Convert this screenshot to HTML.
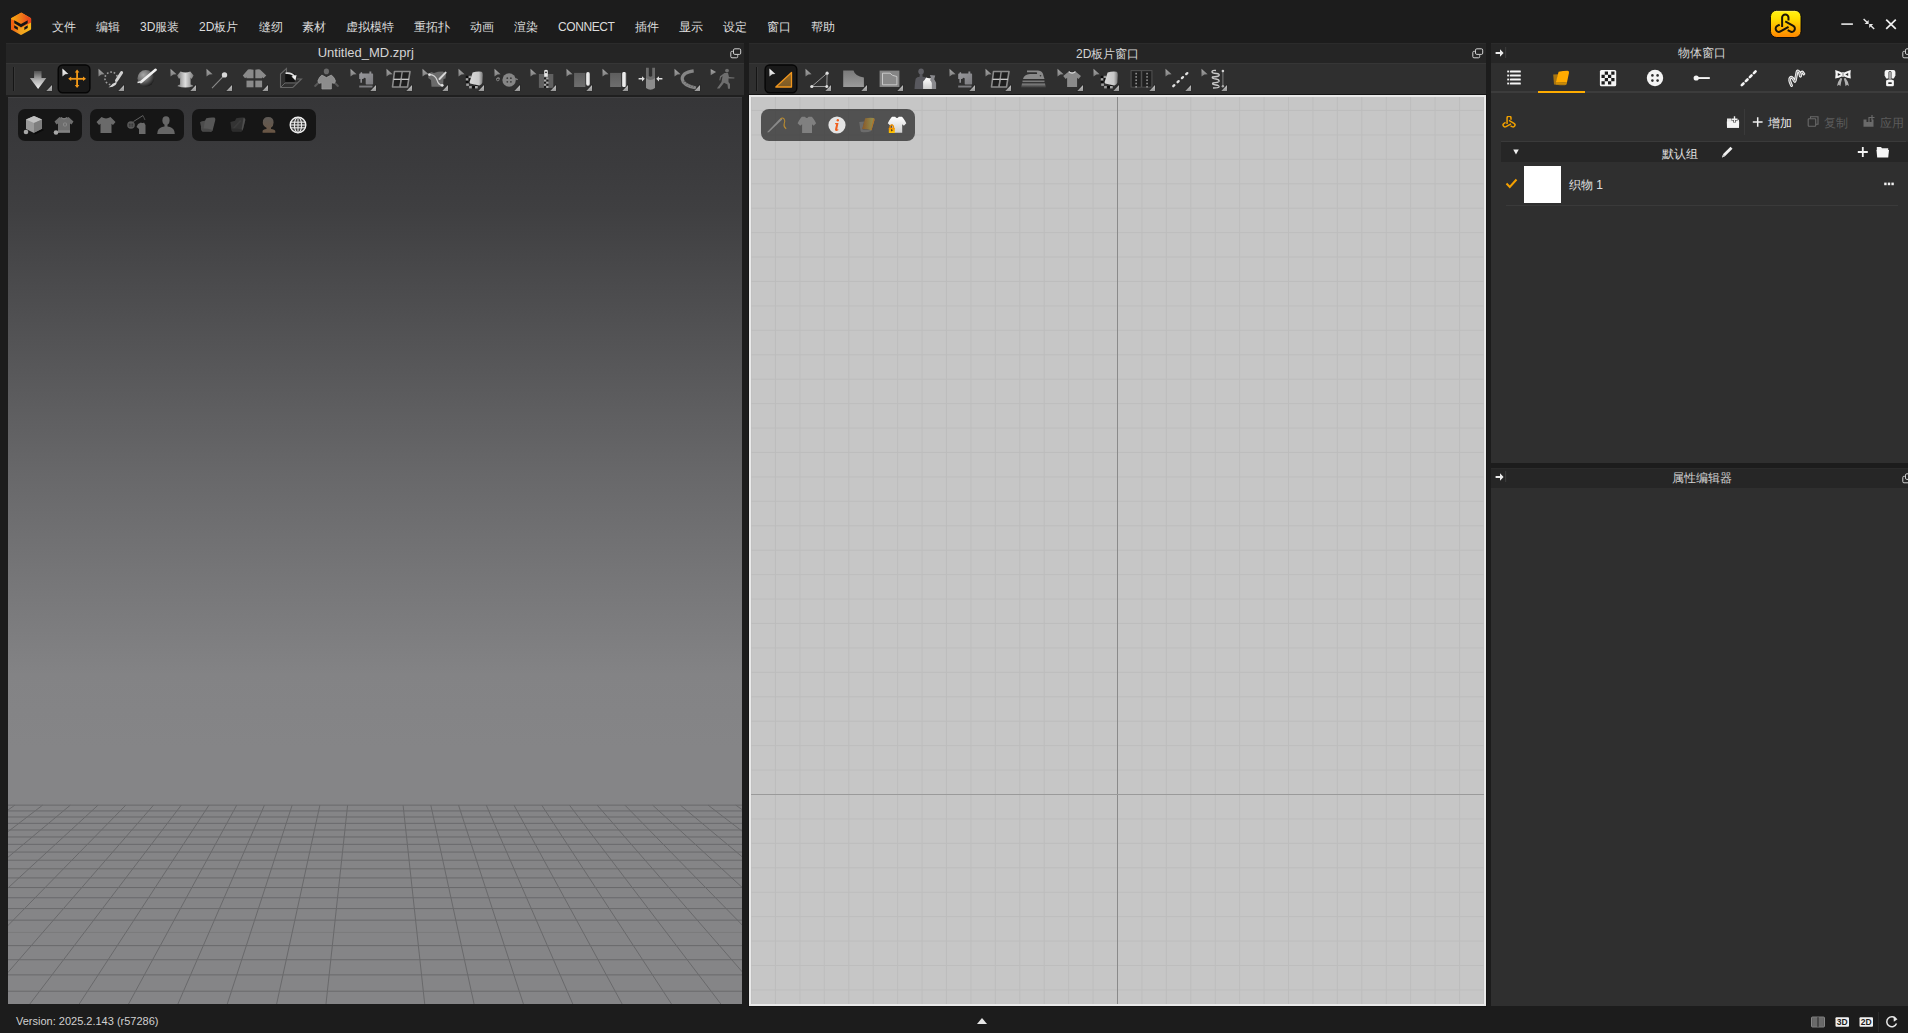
<!DOCTYPE html><html><head><meta charset="utf-8"><style>
*{margin:0;padding:0;box-sizing:border-box}
html,body{width:1908px;height:1033px;overflow:hidden;background:#1c1c1c;font-family:"Liberation Sans",sans-serif;color:#d8d8d8;position:relative}
.abs{position:absolute}
.mi{position:absolute;top:20px;font-size:12px;line-height:14px;color:#dcdcdc;white-space:nowrap}
.title{position:absolute;height:20px;background:#252525;border-top:1px solid #2b2b2b;font-size:12px;line-height:20px;text-align:center;color:#d0d0d0}
.ttl{position:absolute;height:20px;font-size:12px;line-height:20px;text-align:center;color:#d4d4d4;white-space:nowrap}
.tb{position:absolute;height:32px;background:#2f2f2f;border-top:1px solid #363636}
svg{position:absolute;overflow:hidden}
</style></head><body>
<svg width="0" height="0" style="position:absolute"><defs>
<linearGradient id="gCur" x1="0" y1="0" x2="0" y2="1"><stop offset="0" stop-color="#a8a8a8"/><stop offset="1" stop-color="#7c7c7c"/></linearGradient>
<linearGradient id="gCurW" x1="0" y1="0" x2="0" y2="1"><stop offset="0" stop-color="#ffffff"/><stop offset="1" stop-color="#c8c8c8"/></linearGradient>
<linearGradient id="gSub" x1="0" y1="0" x2="0" y2="1"><stop offset="0" stop-color="#c4c4c4"/><stop offset="1" stop-color="#959595"/></linearGradient>
<linearGradient id="gDown" x1="0" y1="0" x2="0" y2="1"><stop offset="0" stop-color="#505050"/><stop offset="0.55" stop-color="#b8b8b8"/><stop offset="1" stop-color="#f2f2f2"/></linearGradient>
<linearGradient id="gOr" x1="0" y1="0" x2="0" y2="1"><stop offset="0" stop-color="#f07a10"/><stop offset="1" stop-color="#ffb020"/></linearGradient>
<linearGradient id="gGray" x1="0" y1="0" x2="0" y2="1"><stop offset="0" stop-color="#7a7a7a"/><stop offset="1" stop-color="#9a9a9a"/></linearGradient>
<linearGradient id="gGray2" x1="0" y1="0" x2="1" y2="1"><stop offset="0" stop-color="#9a9a9e"/><stop offset="1" stop-color="#7c7c80"/></linearGradient>
<linearGradient id="gShirt" x1="0" y1="0" x2="1" y2="0"><stop offset="0" stop-color="#7a7a7a"/><stop offset="0.5" stop-color="#dedede"/><stop offset="1" stop-color="#7a7a7a"/></linearGradient>
<linearGradient id="gBar" x1="0" y1="0" x2="1" y2="0"><stop offset="0" stop-color="#bdbdbd"/><stop offset="0.5" stop-color="#ffffff"/><stop offset="1" stop-color="#a0a0a0"/></linearGradient>
<linearGradient id="gSq" x1="0" y1="0" x2="0" y2="1"><stop offset="0" stop-color="#5e5e5e"/><stop offset="1" stop-color="#6e6e6e"/></linearGradient>
<radialGradient id="gBall" cx="0.35" cy="0.3" r="0.75"><stop offset="0" stop-color="#a8a8a8"/><stop offset="0.5" stop-color="#707070"/><stop offset="1" stop-color="#1a1a1a"/></radialGradient>
<linearGradient id="gFab" x1="0" y1="0" x2="1" y2="0"><stop offset="0" stop-color="#d8d8d8"/><stop offset="0.7" stop-color="#c8c8c8"/><stop offset="1" stop-color="#777"/></linearGradient>
<linearGradient id="gOrTri" x1="0" y1="0" x2="0" y2="1"><stop offset="0" stop-color="#9a6a20"/><stop offset="1" stop-color="#7a5a28"/></linearGradient>
<linearGradient id="gYel" x1="0" y1="0" x2="0" y2="1"><stop offset="0" stop-color="#ffe100"/><stop offset="1" stop-color="#ff8a00"/></linearGradient>
<linearGradient id="gLogo" x1="0" y1="0" x2="1" y2="1"><stop offset="0" stop-color="#f5a800"/><stop offset="0.5" stop-color="#f07810"/><stop offset="1" stop-color="#e84a10"/></linearGradient>
<linearGradient id="gIron" x1="0" y1="0" x2="0" y2="1"><stop offset="0" stop-color="#8a8a8a"/><stop offset="1" stop-color="#2e2e2e"/></linearGradient>
<linearGradient id="gWhiteSh" x1="0" y1="0" x2="0" y2="1"><stop offset="0" stop-color="#ffffff"/><stop offset="1" stop-color="#cfcfcf"/></linearGradient>
<linearGradient id="gFabOr" x1="0" y1="0" x2="1" y2="0"><stop offset="0" stop-color="#8a5828"/><stop offset="1" stop-color="#929452"/></linearGradient>
</defs></svg>
<svg style="left:9px;top:11px" width="25" height="26" viewBox="0 0 25 26">
<defs><linearGradient id="lgTop" x1="0" y1="0" x2="1" y2="0"><stop offset="0" stop-color="#f7b010"/><stop offset="0.5" stop-color="#f07a18"/><stop offset="1" stop-color="#e63a1e"/></linearGradient>
<linearGradient id="lgBot" x1="0" y1="0" x2="1" y2="0"><stop offset="0" stop-color="#f05a10"/><stop offset="0.45" stop-color="#f0a020"/><stop offset="1" stop-color="#f8b818"/></linearGradient></defs>
<path d="M12 1.8 Q12.3 1.6 12.6 1.8 L21.6 6.9 Q22.1 7.2 22.1 7.8 L22.1 17.8 Q22.1 18.4 21.6 18.7 L12.6 23.8 Q12 24.1 11.4 23.8 L2.5 18.7 Q2 18.4 2 17.8 L2 7.8 Q2 7.2 2.5 6.9 Z" fill="url(#lgBot)"/>
<path d="M12 1.8 Q12.3 1.6 12.6 1.8 L21.6 6.9 Q22.1 7.2 22.1 7.8 L22.1 11.5 L12 17 L2 11.5 L2 7.8 Q2 7.2 2.5 6.9 Z" fill="url(#lgTop)"/>
<path d="M2 8 L5.2 9.5 L5.2 18.5 L2.5 18.7 Q2 18.4 2 17.8 Z" fill="#f06010"/>
<path d="M5.2 9.2 L12 13 L18.7 9.2 L18.7 12.2 L12 16.2 L5.2 12.2 Z" fill="#141414"/>
<path d="M5.2 14.3 L8.8 16.3 L8.8 18.9 L5.2 16.9 Z" fill="#141414"/><path d="M18.7 14.3 L15.3 16.3 L15.3 18.9 L18.7 16.9 Z" fill="#141414"/>
</svg>
<div class="mi" style="left:52px">文件</div>
<div class="mi" style="left:96px">编辑</div>
<div class="mi" style="left:140px">3D服装</div>
<div class="mi" style="left:199px">2D板片</div>
<div class="mi" style="left:259px">缝纫</div>
<div class="mi" style="left:302px">素材</div>
<div class="mi" style="left:346px">虚拟模特</div>
<div class="mi" style="left:414px">重拓扑</div>
<div class="mi" style="left:470px">动画</div>
<div class="mi" style="left:514px">渲染</div>
<div class="mi" style="left:558px"><span style="letter-spacing:-0.4px">CONNECT</span></div>
<div class="mi" style="left:635px">插件</div>
<div class="mi" style="left:679px">显示</div>
<div class="mi" style="left:723px">设定</div>
<div class="mi" style="left:767px">窗口</div>
<div class="mi" style="left:811px">帮助</div>
<svg style="left:1769px;top:10px" width="33" height="29" viewBox="-1 0 33 29">
<defs><linearGradient id="yg2" x1="0" y1="0" x2="0" y2="1"><stop offset="0" stop-color="#fff080"/><stop offset="0.08" stop-color="#ffee10"/><stop offset="0.3" stop-color="#ffe000"/><stop offset="1" stop-color="#ff8400"/></linearGradient></defs>
<rect x="0.5" y="0.3" width="30.5" height="27.2" rx="6.2" fill="url(#yg2)" stroke="#050505" stroke-width="0.9"/>
<g fill="none" stroke="#1a1408" stroke-width="2" stroke-linecap="butt" transform="translate(0.4,0)"><path d="M11.72 16.9 L11.72 7.6 A3.18 3.18 0 0 1 18.08 7.6 L18.08 10.4"/><g transform="rotate(120 14.9 15)"><path d="M11.72 16.9 L11.72 7.6 A3.18 3.18 0 0 1 18.08 7.6 L18.08 10.4"/></g><g transform="rotate(240 14.9 15)"><path d="M11.72 16.9 L11.72 7.6 A3.18 3.18 0 0 1 18.08 7.6 L18.08 10.4"/></g></g>
</svg>
<svg style="left:1838px;top:16px" width="62" height="16" viewBox="0 0 62 16">
<rect x="3.3" y="7.3" width="11.6" height="1.6" fill="#e8e8e8"/>
<g stroke="#e8e8e8" stroke-width="1.4"><path d="M25.6 2.9 L29.2 6.5"/><path d="M36.2 13 L32.6 9.4"/></g><g fill="#e8e8e8"><path d="M30.6 7.9 L26.6 7.9 L30.6 3.9 Z"/><path d="M31.2 8 L35.2 8 L31.2 12 Z"/></g>
<g stroke="#f0f0f0" stroke-width="1.7"><path d="M48.2 3.6 L57.8 12.8"/><path d="M57.8 3.6 L48.2 12.8"/></g>
</svg>
<div class="title" style="left:6px;top:43px;width:738px"></div>
<div class="ttl" style="left:6px;top:43px;width:719.5px;font-size:13px">Untitled_MD.zprj</div>
<svg style="left:730px;top:48px" width="12" height="11" viewBox="0 0 12 11">
<rect x="3.5" y="0.8" width="7.2" height="5.6" rx="1.3" fill="none" stroke="#d0d0d0" stroke-width="1"/>
<path d="M2.8 3.3 L1.8 3.3 Q0.8 3.3 0.8 4.5 L0.8 8.6 Q0.8 9.8 2 9.8 L6.5 9.8 Q7.7 9.8 7.7 8.6 L7.7 7.2" fill="none" stroke="#d0d0d0" stroke-width="1"/>
</svg>
<div class="tb" style="left:6px;top:63px;width:738px"></div>
<div class="abs" style="left:13px;top:67px;width:1px;height:24px;background:#151515"></div><div class="abs" style="left:14px;top:67px;width:1px;height:24px;background:#383838"></div>
<svg style="left:20px;top:63px" width="36" height="32"><path d="M14.1 7.9 L21.5 7.9 L21.5 15 L26.3 15 L18.1 26 L9.9 15 L14.1 15 Z" fill="url(#gDown)"/><path d="M25.2 28.2 L32.2 21 L32.2 28.2 Z" fill="#141414" opacity="0.7"/><path d="M26.2 28 L32 22 L32 28 Z" fill="url(#gSub)"/></svg>
<svg style="left:56px;top:63px" width="36" height="32"><rect x="2.2" y="2" width="31.7" height="27.7" rx="4.5" fill="#191919" stroke="#060606" stroke-width="1.4"/><path d="M6.4 5.4 L12.4 11 L9.2 11.3 L6.4 13.4 Z" fill="url(#gCurW)"/><g stroke="#f39a18" stroke-width="1.8" fill="none"><path d="M21.1 8.5 L21.1 23.2"/><path d="M14 15.8 L28.3 15.8"/></g><g fill="#f59a18"><path d="M21.1 6.6 L23.4 9.6 L18.8 9.6 Z"/><path d="M21.1 25 L23.4 22 L18.8 22 Z"/><path d="M12.2 15.8 L15.2 13.5 L15.2 18.1 Z"/><path d="M30 15.8 L27 13.5 L27 18.1 Z"/></g></svg>
<svg style="left:92px;top:63px" width="36" height="32"><path d="M6.5 5.7 L12.6 11.3 L9.4 11.5 L6.5 13.6 Z" fill="url(#gCur)"/><circle cx="19.2" cy="15.4" r="6.3" fill="none" stroke="#9c9c9c" stroke-width="1.6" stroke-dasharray="1.6 1.9"/><path d="M29.6 9.6 L24.5 17.5" stroke="#d0d0d0" stroke-width="3" stroke-linecap="round"/><path d="M16.5 24.2 Q20 24.8 23.5 22 Q25 20.5 24.2 19.5 Q22 19.6 20 21.5 Q18 23.5 16.5 24.2 Z" fill="#d8d8d8"/><path d="M25.2 28.2 L32.2 21 L32.2 28.2 Z" fill="#141414" opacity="0.7"/><path d="M26.2 28 L32 22 L32 28 Z" fill="url(#gSub)"/></svg>
<svg style="left:128px;top:63px" width="36" height="32"><circle cx="17.8" cy="15.3" r="8.3" fill="url(#gBall)"/><path d="M27.6 6.8 L13 19" stroke="#f0f0f0" stroke-width="2.6" stroke-linecap="round"/><path d="M14 18.5 L9.5 19.5" stroke="#e0e0e0" stroke-width="1.6"/></svg>
<svg style="left:164px;top:63px" width="36" height="32"><path d="M6.5 5.7 L12.6 11.3 L9.4 11.5 L6.5 13.6 Z" fill="url(#gCur)"/><path d="M16.5 8.5 Q21.4 10.5 26.3 8.5 L29.6 12.5 L27.6 16 L26.6 14.5 L26.6 21.5 Q29.5 22 29.2 23.2 Q21.4 26 13.5 23.2 Q13.2 22 16.1 21.5 L16.1 14.5 L15.1 16 L13.1 12.5 Z" fill="url(#gShirt)"/><path d="M25.2 28.2 L32.2 21 L32.2 28.2 Z" fill="#141414" opacity="0.7"/><path d="M26.2 28 L32 22 L32 28 Z" fill="url(#gSub)"/></svg>
<svg style="left:200px;top:63px" width="36" height="32"><path d="M6.5 5.7 L12.6 11.3 L9.4 11.5 L6.5 13.6 Z" fill="url(#gCur)"/><path d="M23.8 12.8 L12 25.2" stroke="#8a8a8a" stroke-width="1.1"/><circle cx="24.5" cy="11.9" r="2.7" fill="#d8d8d8"/><path d="M25.2 28.2 L32.2 21 L32.2 28.2 Z" fill="#141414" opacity="0.7"/><path d="M26.2 28 L32 22 L32 28 Z" fill="url(#gSub)"/></svg>
<svg style="left:236px;top:63px" width="36" height="32"><g fill="#8a8a8a"><path d="M12 6.5 Q14.5 6 17.5 6.8 L17.5 15.3 L10.5 15.3 L10.5 14.2 L9 15.2 L6.8 12.5 Z"/><path d="M24 6.5 Q21.5 6 19.3 6.8 L19.3 15.3 L26 15.3 L26 14.2 L27.5 15.2 L30.3 12.5 Z"/><rect x="10.5" y="17.6" width="7" height="6.7"/><rect x="19.3" y="17.6" width="6.8" height="6.7"/></g><path d="M25.2 28.2 L32.2 21 L32.2 28.2 Z" fill="#141414" opacity="0.7"/><path d="M26.2 28 L32 22 L32 28 Z" fill="url(#gSub)"/></svg>
<svg style="left:272px;top:63px" width="36" height="32"><path d="M8.5 24.5 L8.5 11 L14.5 5.5 L14.5 10" fill="none" stroke="#666" stroke-width="1.1"/><path d="M8.5 24.5 L20.8 24.5 L29.5 16 L25 16" fill="none" stroke="#666" stroke-width="1.1"/><path d="M8.5 24.5 L13 20 L25 20" fill="none" stroke="#666" stroke-width="1"/><rect x="13.2" y="10.5" width="9.5" height="8.5" fill="#111"/><path d="M13.5 10.2 Q20 9.5 22.5 13.5" fill="none" stroke="#e0e0e0" stroke-width="1.6"/><path d="M19.5 13.5 L24.5 12 L23.5 17.5 Z" fill="#f0f0f0"/></svg>
<svg style="left:308px;top:63px" width="36" height="32"><path d="M10.5 19.8 L7.1 22.9 M26.6 19.8 L29.9 22.9" stroke="#585858" stroke-width="2" stroke-linecap="round"/><ellipse cx="18.4" cy="8.4" rx="2.6" ry="2.8" fill="#6a6a6a"/><path d="M13.9 12.1 L18.4 14.6 L23.2 12.1 Q26 13.5 27.5 18 L26.3 20.3 L23.4 19.8 L23.4 26 L13.9 26 L13.9 19.8 L11 20.3 L9.8 18 Q11.3 13.5 13.9 12.1 Z" fill="#8c8c8c" stroke="#a2a2a2" stroke-width="0.7"/></svg>
<svg style="left:344px;top:63px" width="36" height="32"><path d="M6.5 5.7 L12.6 11.3 L9.4 11.5 L6.5 13.6 Z" fill="url(#gCur)"/><path d="M15.2 11.2 Q15.2 10.5 16 10.5 L16.4 10.5 L16.8 9.3 L18 9.3 L18.3 10.5 L25.4 10.5 L25.4 8.6 L27.3 8.6 L27.3 10.5 L28.4 10.5 Q29.1 10.5 29.1 11.2 L29.1 20.8 Q29.1 21.4 28.4 21.4 L22.4 21.4 Q21.7 21.4 21.7 20.8 L21.7 15.5 Q21 14.3 20 15 L19.2 16.1 L18 16.1 L18 19.8 L16.4 19.8 L16.4 16.1 L15.2 16.1 Z" fill="url(#gGray2)"/><rect x="15.2" y="22.6" width="13.3" height="1.9" fill="#7a7a7e"/><path d="M25.2 28.2 L32.2 21 L32.2 28.2 Z" fill="#141414" opacity="0.7"/><path d="M26.2 28 L32 22 L32 28 Z" fill="url(#gSub)"/></svg>
<svg style="left:380px;top:63px" width="36" height="32"><path d="M6.5 5.7 L12.6 11.3 L9.4 11.5 L6.5 13.6 Z" fill="url(#gCur)"/><path d="M14.5 8.5 L30 8.5 L27.5 24 L12.5 24 Z" fill="#1e1e1e" stroke="#8a8a8a" stroke-width="1.6" stroke-linejoin="round"/><path d="M22.2 8.5 L20 24" stroke="#8a8a8a" stroke-width="1.4"/><path d="M13.6 16.3 L28.8 16.3" stroke="#d8d8d8" stroke-width="1.2"/><path d="M21.1 16.3 L20 24" stroke="#8a8a8a" stroke-width="1.4"/><path d="M25.2 28.2 L32.2 21 L32.2 28.2 Z" fill="#141414" opacity="0.7"/><path d="M26.2 28 L32 22 L32 28 Z" fill="url(#gSub)"/></svg>
<svg style="left:416px;top:63px" width="36" height="32"><path d="M6.5 5.7 L12.6 11.3 L9.4 11.5 L6.5 13.6 Z" fill="url(#gCur)"/><path d="M12.5 12 L15 9 L18 10 L22 8.8 L27 8.5 L30 11.5 L29.5 15.5 L27.5 16 L27 23.8 L15.5 23.8 L15 17 L12.2 15 Z" fill="#6a6a6a"/><path d="M13.4 11.6 Q19 11.5 21 17 Q22.5 22 26.2 22.3" fill="none" stroke="#d0d0d0" stroke-width="1.2"/><circle cx="13.4" cy="11.6" r="1.4" fill="#e0e0e0"/><circle cx="26.2" cy="22.3" r="1.4" fill="#e0e0e0"/><path d="M29.6 9.6 L23.5 16" stroke="#d8d8d8" stroke-width="2" stroke-linecap="round"/><path d="M25.2 28.2 L32.2 21 L32.2 28.2 Z" fill="#141414" opacity="0.7"/><path d="M26.2 28 L32 22 L32 28 Z" fill="url(#gSub)"/></svg>
<svg style="left:452px;top:63px" width="36" height="32"><path d="M6.5 5.7 L12.6 11.3 L9.4 11.5 L6.5 13.6 Z" fill="url(#gCur)"/><rect x="13.8" y="12.8" width="2.7" height="2.4" fill="#0c0c0c"/><rect x="16.6" y="12.8" width="2.7" height="2.4" fill="#9a9a9a"/><rect x="13.8" y="15.2" width="2.7" height="2.4" fill="#a8a8a8"/><rect x="16.6" y="15.2" width="2.7" height="2.4" fill="#0c0c0c"/><rect x="13.8" y="17.8" width="2.7" height="2.4" fill="#0c0c0c"/><rect x="14.2" y="20.5" width="2.7" height="2.4" fill="#a0a0a0"/><rect x="17.1" y="23" width="2.7" height="2.4" fill="#9a9a9a"/><rect x="20.2" y="23" width="2.7" height="2.4" fill="#0c0c0c"/><rect x="23" y="23" width="2.7" height="2.4" fill="#a8a8a8"/><rect x="23" y="20.3" width="2.7" height="2.4" fill="#0c0c0c"/><rect x="17.1" y="20.6" width="2.7" height="2.4" fill="#333"/><path d="M20.6 9.4 Q25 8.2 29.5 8.7 Q31 9.2 30.8 12 L30.4 19.5 Q30 21.8 27.4 22.4 Q22 21.8 18.2 20.6 Q17.4 20 17.8 18.5 Z" fill="url(#gFab)"/><path d="M25.2 28.2 L32.2 21 L32.2 28.2 Z" fill="#141414" opacity="0.7"/><path d="M26.2 28 L32 22 L32 28 Z" fill="url(#gSub)"/></svg>
<svg style="left:488px;top:63px" width="36" height="32"><path d="M6.5 5.7 L12.6 11.3 L9.4 11.5 L6.5 13.6 Z" fill="url(#gCur)"/><path d="M8.3 16 Q10 13.5 12 15.5" fill="none" stroke="#888" stroke-width="1"/><circle cx="9.8" cy="16.5" r="1.3" fill="none" stroke="#888" stroke-width="0.9"/><path d="M27 16 Q29 15.5 29.5 17" fill="none" stroke="#888" stroke-width="1.2"/><circle cx="21.1" cy="17" r="6.7" fill="#858585"/><g fill="#3a3a3a"><circle cx="19.3" cy="15.2" r="0.9"/><circle cx="22.9" cy="15.2" r="0.9"/><circle cx="19.3" cy="18.8" r="0.9"/><circle cx="22.9" cy="18.8" r="0.9"/></g><path d="M25.2 28.2 L32.2 21 L32.2 28.2 Z" fill="#141414" opacity="0.7"/><path d="M26.2 28 L32 22 L32 28 Z" fill="url(#gSub)"/></svg>
<svg style="left:524px;top:63px" width="36" height="32"><path d="M6.5 5.7 L12.6 11.3 L9.4 11.5 L6.5 13.6 Z" fill="url(#gCur)"/><rect x="14.9" y="11" width="14.4" height="13.9" fill="#606060"/><rect x="20.0" y="14.5" width="2.2" height="2.1" fill="#1a1a1a"/><rect x="22.2" y="14.5" width="2.2" height="2.1" fill="#aaa"/><rect x="22.2" y="16.6" width="2.2" height="2.1" fill="#1a1a1a"/><rect x="20.0" y="16.6" width="2.2" height="2.1" fill="#aaa"/><rect x="20.0" y="18.7" width="2.2" height="2.1" fill="#1a1a1a"/><rect x="22.2" y="18.7" width="2.2" height="2.1" fill="#aaa"/><rect x="22.2" y="20.8" width="2.2" height="2.1" fill="#1a1a1a"/><rect x="20.0" y="20.8" width="2.2" height="2.1" fill="#aaa"/><rect x="20.0" y="22.9" width="2.2" height="2.1" fill="#1a1a1a"/><rect x="22.2" y="22.9" width="2.2" height="2.1" fill="#aaa"/><path d="M20.2 7.5 Q22 5.8 23.8 7.5 L23.8 13.8 L20.2 13.8 Z" fill="#e8e8e8"/><circle cx="22" cy="9.3" r="0.9" fill="#222"/><path d="M25.2 28.2 L32.2 21 L32.2 28.2 Z" fill="#141414" opacity="0.7"/><path d="M26.2 28 L32 22 L32 28 Z" fill="url(#gSub)"/></svg>
<svg style="left:560px;top:63px" width="36" height="32"><path d="M6.5 5.7 L12.6 11.3 L9.4 11.5 L6.5 13.6 Z" fill="url(#gCur)"/><rect x="14.1" y="9.9" width="11.3" height="14.1" fill="url(#gSq)"/><rect x="26" y="9" width="4" height="13.8" rx="2" fill="url(#gBar)"/><path d="M25.2 28.2 L32.2 21 L32.2 28.2 Z" fill="#141414" opacity="0.7"/><path d="M26.2 28 L32 22 L32 28 Z" fill="url(#gSub)"/></svg>
<svg style="left:596px;top:63px" width="36" height="32"><path d="M6.5 5.7 L12.6 11.3 L9.4 11.5 L6.5 13.6 Z" fill="url(#gCur)"/><rect x="14.1" y="9.9" width="11.1" height="14.1" fill="url(#gSq)"/><rect x="26" y="9" width="4.2" height="15" rx="1.5" fill="url(#gBar)"/><path d="M25.2 28.2 L32.2 21 L32.2 28.2 Z" fill="#141414" opacity="0.7"/><path d="M26.2 28 L32 22 L32 28 Z" fill="url(#gSub)"/></svg>
<svg style="left:632px;top:63px" width="36" height="32"><path d="M14 4.8 L16.8 4.8 L16.8 13 Q18.5 14.5 20.2 13 L20.2 4.8 L23 4.8 L23 17 L14 17 Z" fill="#6c6c6c"/><path d="M14 15 Q18.5 19 23 15 L23 25 Q18.5 28.5 14 25 Z" fill="#8c8c8c"/><g fill="#e0e0e0"><path d="M6.6 15 L10 15 L10 13.2 L12.8 15.8 L10 18.4 L10 16.6 L6.6 16.6 Z"/><path d="M30.4 15 L27 15 L27 13.2 L24.2 15.8 L27 18.4 L27 16.6 L30.4 16.6 Z"/></g></svg>
<svg style="left:668px;top:63px" width="36" height="32"><path d="M6.5 5.7 L12.6 11.3 L9.4 11.5 L6.5 13.6 Z" fill="url(#gCur)"/><path d="M25.7 7.9 Q14 9.5 14.2 16 Q15 22.5 28 25" fill="none" stroke="#858585" stroke-width="3.2"/><path d="M15.5 19 L17 18 M17.5 21 L18.8 20 M20 22.6 L21 21.5 M22.5 23.6 L23.2 22.5 M25 24.4 L25.5 23.3" stroke="#3a3a3a" stroke-width="0.6"/><path d="M25.2 28.2 L32.2 21 L32.2 28.2 Z" fill="#141414" opacity="0.7"/><path d="M26.2 28 L32 22 L32 28 Z" fill="url(#gSub)"/></svg>
<svg style="left:704px;top:63px" width="36" height="32"><path d="M6.7 5.9 L12.1 9.1 L6.7 12.2 Z" fill="url(#gCur)"/><circle cx="23" cy="7.6" r="1.9" fill="#6e6e6e"/><path d="M20.5 10 L24 10 L25 14 L30.5 14.6 L30.3 15.5 L24.5 15.6 L24.5 19 L26 21 L26 25.8 L24 25.8 L23.5 21.5 L20 19.8 L15.5 25.6 L12.9 25.6 L17.5 19 L18.6 13 L17 14.5 L16.2 17.5 L15.3 17.2 L16 13.2 Z" fill="#6e6e6e"/></svg>
<div class="abs" style="left:6px;top:95px;width:738px;height:2px;background:#1f1f1f"></div>
<div class="abs" style="left:8px;top:97px;width:734px;height:907px;background:linear-gradient(#363638 0px,#3b3b3d 68px,#3f3f41 113px,#68686a 378px,#838385 578px,#858587 650px,#858587 907px)"></div>
<svg style="left:8px;top:97px" width="734" height="907" stroke="#69696b" stroke-width="1"><line x1="0" y1="708.14" x2="734" y2="708.14" stroke-opacity="1"/>
<line x1="0" y1="713.93" x2="734" y2="713.93" stroke-opacity="1"/>
<line x1="0" y1="719.99" x2="734" y2="719.99" stroke-opacity="1"/>
<line x1="0" y1="726.34" x2="734" y2="726.34" stroke-opacity="1"/>
<line x1="0" y1="732.99" x2="734" y2="732.99" stroke-opacity="1"/>
<line x1="0" y1="739.98" x2="734" y2="739.98" stroke-opacity="1"/>
<line x1="0" y1="747.33" x2="734" y2="747.33" stroke-opacity="1"/>
<line x1="0" y1="755.06" x2="734" y2="755.06" stroke-opacity="1"/>
<line x1="0" y1="763.21" x2="734" y2="763.21" stroke-opacity="1"/>
<line x1="0" y1="771.82" x2="734" y2="771.82" stroke-opacity="1"/>
<line x1="0" y1="780.91" x2="734" y2="780.91" stroke-opacity="1"/>
<line x1="0" y1="790.54" x2="734" y2="790.54" stroke-opacity="1"/>
<line x1="0" y1="800.75" x2="734" y2="800.75" stroke-opacity="1"/>
<line x1="0" y1="811.60" x2="734" y2="811.60" stroke-opacity="1"/>
<line x1="0" y1="823.15" x2="734" y2="823.15" stroke-opacity="1"/>
<line x1="0" y1="835.47" x2="734" y2="835.47" stroke-opacity="0.35"/>
<line x1="0" y1="848.64" x2="734" y2="848.64" stroke-opacity="1"/>
<line x1="0" y1="862.74" x2="734" y2="862.74" stroke-opacity="1"/>
<line x1="0" y1="877.89" x2="734" y2="877.89" stroke-opacity="1"/>
<line x1="0" y1="894.21" x2="734" y2="894.21" stroke-opacity="1"/>
<line x1="-880.42" y1="708.14" x2="-1853.77" y2="907.00"/>
<line x1="-852.69" y1="708.14" x2="-1804.41" y2="907.00"/>
<line x1="-824.97" y1="708.14" x2="-1755.05" y2="907.00"/>
<line x1="-797.24" y1="708.14" x2="-1705.69" y2="907.00"/>
<line x1="-769.51" y1="708.14" x2="-1656.33" y2="907.00"/>
<line x1="-741.78" y1="708.14" x2="-1606.98" y2="907.00"/>
<line x1="-714.05" y1="708.14" x2="-1557.62" y2="907.00"/>
<line x1="-686.32" y1="708.14" x2="-1508.26" y2="907.00"/>
<line x1="-658.60" y1="708.14" x2="-1458.90" y2="907.00"/>
<line x1="-630.87" y1="708.14" x2="-1409.54" y2="907.00"/>
<line x1="-603.14" y1="708.14" x2="-1360.19" y2="907.00"/>
<line x1="-575.41" y1="708.14" x2="-1310.83" y2="907.00"/>
<line x1="-547.68" y1="708.14" x2="-1261.47" y2="907.00"/>
<line x1="-519.95" y1="708.14" x2="-1212.11" y2="907.00"/>
<line x1="-492.23" y1="708.14" x2="-1162.75" y2="907.00"/>
<line x1="-464.50" y1="708.14" x2="-1113.39" y2="907.00"/>
<line x1="-436.77" y1="708.14" x2="-1064.04" y2="907.00"/>
<line x1="-409.04" y1="708.14" x2="-1014.68" y2="907.00"/>
<line x1="-381.31" y1="708.14" x2="-965.32" y2="907.00"/>
<line x1="-353.58" y1="708.14" x2="-915.96" y2="907.00"/>
<line x1="-325.86" y1="708.14" x2="-866.60" y2="907.00"/>
<line x1="-298.13" y1="708.14" x2="-817.25" y2="907.00"/>
<line x1="-270.40" y1="708.14" x2="-767.89" y2="907.00"/>
<line x1="-242.67" y1="708.14" x2="-718.53" y2="907.00"/>
<line x1="-214.94" y1="708.14" x2="-669.17" y2="907.00"/>
<line x1="-187.22" y1="708.14" x2="-619.81" y2="907.00"/>
<line x1="-159.49" y1="708.14" x2="-570.46" y2="907.00"/>
<line x1="-131.76" y1="708.14" x2="-521.10" y2="907.00"/>
<line x1="-104.03" y1="708.14" x2="-471.74" y2="907.00"/>
<line x1="-76.30" y1="708.14" x2="-422.38" y2="907.00"/>
<line x1="-48.57" y1="708.14" x2="-373.02" y2="907.00"/>
<line x1="-20.85" y1="708.14" x2="-323.66" y2="907.00"/>
<line x1="6.88" y1="708.14" x2="-274.31" y2="907.00"/>
<line x1="34.61" y1="708.14" x2="-224.95" y2="907.00"/>
<line x1="62.34" y1="708.14" x2="-175.59" y2="907.00"/>
<line x1="90.07" y1="708.14" x2="-126.23" y2="907.00"/>
<line x1="117.80" y1="708.14" x2="-76.87" y2="907.00"/>
<line x1="145.52" y1="708.14" x2="-27.52" y2="907.00"/>
<line x1="173.25" y1="708.14" x2="21.84" y2="907.00"/>
<line x1="200.98" y1="708.14" x2="71.20" y2="907.00"/>
<line x1="228.71" y1="708.14" x2="120.56" y2="907.00"/>
<line x1="256.44" y1="708.14" x2="169.92" y2="907.00"/>
<line x1="284.17" y1="708.14" x2="219.28" y2="907.00"/>
<line x1="311.89" y1="708.14" x2="268.63" y2="907.00"/>
<line x1="339.62" y1="708.14" x2="317.99" y2="907.00"/>
<line x1="395.08" y1="708.14" x2="416.71" y2="907.00"/>
<line x1="422.81" y1="708.14" x2="466.07" y2="907.00"/>
<line x1="450.53" y1="708.14" x2="515.42" y2="907.00"/>
<line x1="478.26" y1="708.14" x2="564.78" y2="907.00"/>
<line x1="505.99" y1="708.14" x2="614.14" y2="907.00"/>
<line x1="533.72" y1="708.14" x2="663.50" y2="907.00"/>
<line x1="561.45" y1="708.14" x2="712.86" y2="907.00"/>
<line x1="589.18" y1="708.14" x2="762.22" y2="907.00"/>
<line x1="616.90" y1="708.14" x2="811.57" y2="907.00"/>
<line x1="644.63" y1="708.14" x2="860.93" y2="907.00"/>
<line x1="672.36" y1="708.14" x2="910.29" y2="907.00"/>
<line x1="700.09" y1="708.14" x2="959.65" y2="907.00"/>
<line x1="727.82" y1="708.14" x2="1009.01" y2="907.00"/>
<line x1="755.55" y1="708.14" x2="1058.36" y2="907.00"/>
<line x1="783.27" y1="708.14" x2="1107.72" y2="907.00"/>
<line x1="811.00" y1="708.14" x2="1157.08" y2="907.00"/>
<line x1="838.73" y1="708.14" x2="1206.44" y2="907.00"/>
<line x1="866.46" y1="708.14" x2="1255.80" y2="907.00"/>
<line x1="894.19" y1="708.14" x2="1305.16" y2="907.00"/>
<line x1="921.92" y1="708.14" x2="1354.51" y2="907.00"/>
<line x1="949.64" y1="708.14" x2="1403.87" y2="907.00"/>
<line x1="977.37" y1="708.14" x2="1453.23" y2="907.00"/>
<line x1="1005.10" y1="708.14" x2="1502.59" y2="907.00"/>
<line x1="1032.83" y1="708.14" x2="1551.95" y2="907.00"/>
<line x1="1060.56" y1="708.14" x2="1601.30" y2="907.00"/>
<line x1="1088.28" y1="708.14" x2="1650.66" y2="907.00"/>
<line x1="1116.01" y1="708.14" x2="1700.02" y2="907.00"/>
<line x1="1143.74" y1="708.14" x2="1749.38" y2="907.00"/>
<line x1="1171.47" y1="708.14" x2="1798.74" y2="907.00"/>
<line x1="1199.20" y1="708.14" x2="1848.09" y2="907.00"/>
<line x1="1226.93" y1="708.14" x2="1897.45" y2="907.00"/>
<line x1="1254.65" y1="708.14" x2="1946.81" y2="907.00"/>
<line x1="1282.38" y1="708.14" x2="1996.17" y2="907.00"/>
<line x1="1310.11" y1="708.14" x2="2045.53" y2="907.00"/>
<line x1="1337.84" y1="708.14" x2="2094.89" y2="907.00"/>
<line x1="1365.57" y1="708.14" x2="2144.24" y2="907.00"/>
<line x1="1393.30" y1="708.14" x2="2193.60" y2="907.00"/>
<line x1="1421.02" y1="708.14" x2="2242.96" y2="907.00"/>
<line x1="1448.75" y1="708.14" x2="2292.32" y2="907.00"/>
<line x1="1476.48" y1="708.14" x2="2341.68" y2="907.00"/>
<line x1="1504.21" y1="708.14" x2="2391.03" y2="907.00"/>
<line x1="1531.94" y1="708.14" x2="2440.39" y2="907.00"/>
<line x1="1559.67" y1="708.14" x2="2489.75" y2="907.00"/>
<line x1="1587.39" y1="708.14" x2="2539.11" y2="907.00"/>
<line x1="1615.12" y1="708.14" x2="2588.47" y2="907.00"/></svg>
<div class="abs" style="left:8px;top:97px;width:734px;height:1px;background:#414143"></div>
<div class="abs" style="left:18px;top:109px;width:64px;height:32px;background:#161616;border-radius:7px"></div>
<div class="abs" style="left:90px;top:109px;width:94px;height:32px;background:#161616;border-radius:7px"></div>
<div class="abs" style="left:192px;top:109px;width:124px;height:32px;background:#161616;border-radius:7px"></div>
<svg style="left:22px;top:113px" width="24" height="24" viewBox="0 0 24 24"><path d="M12 3 L20 6.5 L20 16 L12 20 L4 16 L4 6.5 Z" fill="#9a9a9a"/><path d="M12 3 L20 6.5 L12 10 L4 6.5 Z" fill="#c0c0c0"/><path d="M12 10 L20 6.5 L20 16 L12 20 Z" fill="#7e7e7e"/><path d="M12 20 L20 16 L22 17 L13 21.5 Z" fill="#0a0a0a"/><circle cx="4" cy="19" r="2.3" fill="#a8a8a8"/></svg>
<svg style="left:52px;top:113px" width="24" height="24" viewBox="0 0 24 24"><path d="M7.5 4 Q12 6.5 16.5 4 L21.5 8.5 L19.5 11.5 L18 10.5 L18 20 L6 20 L6 10.5 L4.5 11.5 L2.5 8.5 Z" fill="#6e6e6e"/><path d="M9 4.5 Q12 7.5 15 4.5" fill="none" stroke="#8a8a8a" stroke-width="0.9"/><rect x="11.5" y="10" width="3" height="3" rx="0.8" fill="none" stroke="#909090" stroke-width="0.8"/><rect x="6" y="17.5" width="12" height="1.2" fill="#8a8a8a"/><circle cx="4" cy="19.5" r="2.3" fill="#a8a8a8"/></svg>
<svg style="left:94px;top:113px" width="24" height="24" viewBox="0 0 24 24"><path d="M7.5 4 Q12 6.8 16.5 4 L21.5 9 L19 12 L17.5 10.8 L17.5 20 L6.5 20 L6.5 10.8 L5 12 L2.5 9 Z" fill="#6a6a6a"/></svg>
<svg style="left:124px;top:112px" width="24" height="24" viewBox="0 0 24 24"><circle cx="7" cy="13" r="3.8" fill="#5a5a5a"/><g fill="#2a2a2a"><rect x="4.8" y="11.7" width="1.8" height="1"/><rect x="7.4" y="11.7" width="1.8" height="1"/><rect x="4.8" y="13.5" width="1.8" height="1"/><rect x="7.4" y="13.5" width="1.8" height="1"/></g><path d="M9.5 9.5 L19 3.5" stroke="#6a6a6a" stroke-width="0.9"/><path d="M19 3.5 L21 8" stroke="#5a5a5a" stroke-width="0.8"/><path d="M14 12 L17 10.5 Q18.5 11.5 20 10.5 L21.5 13 L21.5 22 L15 22 L15 17 L12.5 15 Z" fill="#6a6a6a"/></svg>
<svg style="left:154px;top:112px" width="24" height="24" viewBox="0 0 24 24"><ellipse cx="12" cy="8.5" rx="3.6" ry="4.2" fill="#666"/><path d="M10.5 12 L13.5 12 L13.5 14.5 Q19 15 20.3 19 L20.8 22 L3.2 22 L3.7 19 Q5 15 10.5 14.5 Z" fill="#666"/></svg>
<svg style="left:198px;top:113px" width="20" height="22" viewBox="0 0 20 22"><path d="M2.4 9 L7 7.8 L8.3 5.2 Q12.5 4.2 16.4 4.6 Q17.6 5.2 17.3 7 L14.6 17.6 Q14 18.8 12 18.6 L4.5 18.4 Q3.6 18.2 3.5 17 Z" fill="#575757"/><path d="M2.4 9 L7 7.8 L5.5 16 L3.6 17.5 Z" fill="#4c4c4c"/><path d="M3.8 15.6 Q9 15.3 14 16.8 L14.5 17.8 Q13.5 18.8 11.5 18.6 L4.5 18.4 Z" fill="#474747"/></svg>
<svg style="left:228px;top:113px" width="20" height="22" viewBox="0 0 20 22"><path d="M2.4 9 L7 7.8 L8.3 5.2 Q12.5 4.2 16.4 4.6 Q17.6 5.2 17.3 7 L14.6 17.6 Q14 18.8 12 18.6 L4.5 18.4 Q3.6 18.2 3.5 17 Z" fill="#333"/><path d="M15.5 5 Q17.6 5.5 17.3 7 L14.8 17 L13.6 16.5 Z" fill="#4e4e4e"/><path d="M4.5 15.5 L12 7 L13.5 8 L6 16 Z" fill="#3c3c3c"/><path d="M3.8 15.6 Q9 15.3 14 16.8 L14.5 17.8 Q13.5 18.8 11.5 18.6 L4.5 18.4 Z" fill="#2c2c2c"/></svg>
<svg style="left:259px;top:112px" width="20" height="24" viewBox="0 0 20 24"><defs><linearGradient id="gBr" x1="0" y1="0" x2="0" y2="1"><stop offset="0" stop-color="#5e5a56"/><stop offset="1" stop-color="#6a5644"/></linearGradient></defs><path d="M9.2 5 Q14.6 5 14.6 10.5 Q14.6 14 12 15.8 L12 17 Q15.8 17.3 16.3 19 L16.3 20.8 L3.6 20.8 L3.6 19 Q4 17.3 7.5 17 L7.5 15.8 Q3.8 14 3.8 10.5 Q3.8 5 9.2 5 Z" fill="url(#gBr)"/></svg>
<svg style="left:288px;top:115px" width="20" height="20" viewBox="0 0 20 20"><circle cx="10" cy="10" r="7.8" fill="#3a3a3a" stroke="#f0f0f0" stroke-width="1.4"/><g stroke="#e8e8e8" stroke-width="1.1" fill="none"><ellipse cx="10" cy="10" rx="3.6" ry="7.8"/><path d="M10 2.2 L10 17.8"/><path d="M2.6 7.2 L17.4 7.2"/><path d="M2.2 10 L17.8 10"/><path d="M2.6 12.8 L17.4 12.8"/></g></svg>
<div class="title" style="left:749px;top:43px;width:737px"></div>
<div class="ttl" style="left:749px;top:44px;width:717.5px">2D板片窗口</div>
<svg style="left:1472px;top:48px" width="12" height="11" viewBox="0 0 12 11">
<rect x="3.5" y="0.8" width="7.2" height="5.6" rx="1.3" fill="none" stroke="#d0d0d0" stroke-width="1"/>
<path d="M2.8 3.3 L1.8 3.3 Q0.8 3.3 0.8 4.5 L0.8 8.6 Q0.8 9.8 2 9.8 L6.5 9.8 Q7.7 9.8 7.7 8.6 L7.7 7.2" fill="none" stroke="#d0d0d0" stroke-width="1"/>
</svg>
<div class="tb" style="left:749px;top:63px;width:737px"></div>
<div class="abs" style="left:756px;top:67px;width:1px;height:24px;background:#151515"></div><div class="abs" style="left:757px;top:67px;width:1px;height:24px;background:#383838"></div>
<svg style="left:763px;top:63px" width="36" height="32"><rect x="2.1" y="2" width="31.7" height="27.7" rx="4.5" fill="#191919" stroke="#060606" stroke-width="1.4"/><path d="M6.4 5.4 L12.4 11 L9.2 11.3 L6.4 13.4 Z" fill="url(#gCurW)"/><path d="M12.8 24 L28.5 9.5 L28.5 24 Z" fill="url(#gOrTri)" stroke="#f0961e" stroke-width="1.3" stroke-linejoin="round"/></svg>
<svg style="left:799px;top:63px" width="36" height="32"><path d="M6.5 5.7 L12.6 11.3 L9.4 11.5 L6.5 13.6 Z" fill="url(#gCur)"/><path d="M12.8 23.5 L28.1 10.2 L27.8 23.5 Z" fill="none" stroke="#9a9a9a" stroke-width="1"/><g fill="#e0e0e0"><circle cx="12.8" cy="23.5" r="1.6"/><circle cx="28.1" cy="10.2" r="1.6"/><circle cx="27.8" cy="23.5" r="1.5"/></g><path d="M25.2 28.2 L32.2 21 L32.2 28.2 Z" fill="#141414" opacity="0.7"/><path d="M26.2 28 L32 22 L32 28 Z" fill="url(#gSub)"/></svg>
<svg style="left:835px;top:63px" width="36" height="32"><path d="M8.2 7.6 L18.5 7.6 Q20 13.3 28.9 14.5 L28.9 24 L8.2 24 Z" fill="url(#gGray)"/><path d="M25.2 28.2 L32.2 21 L32.2 28.2 Z" fill="#141414" opacity="0.7"/><path d="M26.2 28 L32 22 L32 28 Z" fill="url(#gSub)"/></svg>
<svg style="left:871px;top:63px" width="36" height="32"><rect x="8.6" y="7.6" width="19.8" height="16.4" fill="#858585"/><path d="M11.5 10.2 L19 10.2 Q20.5 12.8 25.9 13.5 L25.9 21.8 L11.5 21.8 Z" fill="#8a8a8a" stroke="#d0d0d0" stroke-width="0.9"/><path d="M25.2 28.2 L32.2 21 L32.2 28.2 Z" fill="#141414" opacity="0.7"/><path d="M26.2 28 L32 22 L32 28 Z" fill="url(#gSub)"/></svg>
<svg style="left:907px;top:63px" width="36" height="32"><ellipse cx="14.1" cy="8.4" rx="2.8" ry="3" fill="#606066"/><path d="M12.8 11 L15.4 11 L15.6 13.8 Q18 14 19 14.6 L19 25.9 L7.5 25.9 Q8 18 8.8 15.5 Q10 14 12.6 13.8 Z" fill="#58585e"/><path d="M22.9 12.1 L28.2 12.6 L27.2 16.2 L29.1 19.8 L29.1 25.9 L24 25.9 L24 15 Z" fill="#8a8a8e"/><path d="M16.1 18.6 Q17.5 17.5 19.2 14.6 Q21.5 15.6 23.9 15.1 L23.5 17.3 L24.8 20.1 L24.9 25.9 L16.1 25.9 Z" fill="url(#gWhiteSh)"/></svg>
<svg style="left:943px;top:63px" width="36" height="32"><path d="M6.5 5.7 L12.6 11.3 L9.4 11.5 L6.5 13.6 Z" fill="url(#gCur)"/><path d="M15.2 11.2 Q15.2 10.5 16 10.5 L16.4 10.5 L16.8 9.3 L18 9.3 L18.3 10.5 L25.4 10.5 L25.4 8.6 L27.3 8.6 L27.3 10.5 L28.4 10.5 Q29.1 10.5 29.1 11.2 L29.1 20.8 Q29.1 21.4 28.4 21.4 L22.4 21.4 Q21.7 21.4 21.7 20.8 L21.7 15.5 Q21 14.3 20 15 L19.2 16.1 L18 16.1 L18 19.8 L16.4 19.8 L16.4 16.1 L15.2 16.1 Z" fill="url(#gGray2)"/><rect x="15.2" y="22.6" width="13.3" height="1.9" fill="#7a7a7e"/><path d="M25.2 28.2 L32.2 21 L32.2 28.2 Z" fill="#141414" opacity="0.7"/><path d="M26.2 28 L32 22 L32 28 Z" fill="url(#gSub)"/></svg>
<svg style="left:979px;top:63px" width="36" height="32"><path d="M6.5 5.7 L12.6 11.3 L9.4 11.5 L6.5 13.6 Z" fill="url(#gCur)"/><path d="M14.5 8.5 L30 8.5 L27.5 24 L12.5 24 Z" fill="#1e1e1e" stroke="#8a8a8a" stroke-width="1.6" stroke-linejoin="round"/><path d="M22.2 8.5 L20 24" stroke="#8a8a8a" stroke-width="1.4"/><path d="M13.6 16.3 L28.8 16.3" stroke="#d8d8d8" stroke-width="1.2"/><path d="M21.1 16.3 L20 24" stroke="#8a8a8a" stroke-width="1.4"/><path d="M25.2 28.2 L32.2 21 L32.2 28.2 Z" fill="#141414" opacity="0.7"/><path d="M26.2 28 L32 22 L32 28 Z" fill="url(#gSub)"/></svg>
<svg style="left:1015px;top:63px" width="36" height="32"><path d="M12 7.4 L23 7.4 Q28 7.8 28.5 13 L29.5 16 L8 16 Q9 11.5 15 11 L22 11 Q22.5 9.5 21.5 9.2 L12 9.2 Z" fill="#8a8a8a"/><circle cx="25.5" cy="12.7" r="0.8" fill="#333"/><rect x="7.5" y="17.5" width="22" height="1.6" fill="#7a7a7a"/><path d="M7 20.5 L30 20.5 L31 24.9 L6 24.9 Z" fill="url(#gIron)"/></svg>
<svg style="left:1051px;top:63px" width="36" height="32"><path d="M6.5 5.7 L12.6 11.3 L9.4 11.5 L6.5 13.6 Z" fill="url(#gCur)"/><path d="M18.07 8.20 Q21.10 10.73 24.13 8.20 L30.00 12.94 L27.51 16.10 L26.08 14.84 L26.08 24.00 L16.12 24.00 L16.12 14.84 L14.69 16.10 L12.20 12.94 Z" fill="#8a8a8a"/><path d="M17.8 8.6 Q21.1 11.8 24.4 8.6" fill="none" stroke="#dcdcdc" stroke-width="1.1"/><path d="M25.2 28.2 L32.2 21 L32.2 28.2 Z" fill="#141414" opacity="0.7"/><path d="M26.2 28 L32 22 L32 28 Z" fill="url(#gSub)"/></svg>
<svg style="left:1087px;top:63px" width="36" height="32"><path d="M6.5 5.7 L12.6 11.3 L9.4 11.5 L6.5 13.6 Z" fill="url(#gCur)"/><rect x="13.8" y="12.8" width="2.7" height="2.4" fill="#0c0c0c"/><rect x="16.6" y="12.8" width="2.7" height="2.4" fill="#9a9a9a"/><rect x="13.8" y="15.2" width="2.7" height="2.4" fill="#a8a8a8"/><rect x="16.6" y="15.2" width="2.7" height="2.4" fill="#0c0c0c"/><rect x="13.8" y="17.8" width="2.7" height="2.4" fill="#0c0c0c"/><rect x="14.2" y="20.5" width="2.7" height="2.4" fill="#a0a0a0"/><rect x="17.1" y="23" width="2.7" height="2.4" fill="#9a9a9a"/><rect x="20.2" y="23" width="2.7" height="2.4" fill="#0c0c0c"/><rect x="23" y="23" width="2.7" height="2.4" fill="#a8a8a8"/><rect x="23" y="20.3" width="2.7" height="2.4" fill="#0c0c0c"/><rect x="17.1" y="20.6" width="2.7" height="2.4" fill="#333"/><path d="M20.6 9.4 Q25 8.2 29.5 8.7 Q31 9.2 30.8 12 L30.4 19.5 Q30 21.8 27.4 22.4 Q22 21.8 18.2 20.6 Q17.4 20 17.8 18.5 Z" fill="url(#gFab)"/><path d="M25.2 28.2 L32.2 21 L32.2 28.2 Z" fill="#141414" opacity="0.7"/><path d="M26.2 28 L32 22 L32 28 Z" fill="url(#gSub)"/></svg>
<svg style="left:1123px;top:63px" width="36" height="32"><rect x="8" y="7.6" width="21" height="16.5" fill="none" stroke="#555" stroke-width="0.8"/><rect x="9" y="8.5" width="8.5" height="15" fill="#202020"/><rect x="19.5" y="8.5" width="8.5" height="15" fill="#202020"/><path d="M18.5 8 L18.5 24" stroke="#505050" stroke-width="1.2"/><rect x="12.4" y="9.8" width="1.5" height="1.6" fill="#9a9a9a"/><rect x="23.3" y="9.8" width="1.5" height="1.6" fill="#9a9a9a"/><rect x="12.4" y="13.1" width="1.5" height="1.6" fill="#9a9a9a"/><rect x="23.3" y="13.1" width="1.5" height="1.6" fill="#9a9a9a"/><rect x="12.4" y="16.4" width="1.5" height="1.6" fill="#9a9a9a"/><rect x="23.3" y="16.4" width="1.5" height="1.6" fill="#9a9a9a"/><rect x="12.4" y="19.7" width="1.5" height="1.6" fill="#9a9a9a"/><rect x="23.3" y="19.7" width="1.5" height="1.6" fill="#9a9a9a"/><rect x="12.4" y="23.0" width="1.5" height="1.6" fill="#9a9a9a"/><rect x="23.3" y="23.0" width="1.5" height="1.6" fill="#9a9a9a"/><path d="M25.2 28.2 L32.2 21 L32.2 28.2 Z" fill="#141414" opacity="0.7"/><path d="M26.2 28 L32 22 L32 28 Z" fill="url(#gSub)"/></svg>
<svg style="left:1159px;top:63px" width="36" height="32"><path d="M6.5 5.7 L12.6 11.3 L9.4 11.5 L6.5 13.6 Z" fill="url(#gCur)"/><path d="M13.6 23.8 L29.7 8.8" stroke="#e0e0e0" stroke-width="2.3" stroke-linecap="round" stroke-dasharray="1.5 4.4" stroke-dashoffset="-0.9"/><path d="M25.2 28.2 L32.2 21 L32.2 28.2 Z" fill="#141414" opacity="0.7"/><path d="M26.2 28 L32 22 L32 28 Z" fill="url(#gSub)"/></svg>
<svg style="left:1195px;top:63px" width="36" height="32"><path d="M6.5 5.7 L12.6 11.3 L9.4 11.5 L6.5 13.6 Z" fill="url(#gCur)"/><path d="M21 7.5 Q17 7 17 8.8 Q17 10.3 21.5 10.5 Q25 11 24 12.5 Q23 13.8 17.5 14 Q16.5 15.5 21 16 Q24.5 16.5 24 18.5 Q23.5 19.5 18 20 Q16.5 21.5 21 22 Q24.5 22.5 24 24 Q23.5 25 18 25" fill="none" stroke="#c8c8c8" stroke-width="1.4"/><path d="M27.9 8 L27.9 23.5" stroke="#777" stroke-width="1.1"/><circle cx="27.9" cy="8" r="1.3" fill="#cfcfcf"/><circle cx="27.9" cy="23.2" r="1.2" fill="#aaa"/><path d="M25.2 28.2 L32.2 21 L32.2 28.2 Z" fill="#141414" opacity="0.7"/><path d="M26.2 28 L32 22 L32 28 Z" fill="url(#gSub)"/></svg>
<div class="abs" style="left:748px;top:94px;width:739px;height:913px;background:#161616"></div>
<div class="abs" style="left:749px;top:95px;width:737px;height:911px;background:#e9e9e9"></div>
<div class="abs" style="left:751px;top:97px;width:733px;height:907px;background:#c6c6c6"></div>
<svg style="left:751px;top:97px" width="733" height="907" stroke="#bdbdbd" stroke-width="1"><line x1="342.07" y1="0" x2="342.07" y2="907"/>
<line x1="317.64" y1="0" x2="317.64" y2="907"/>
<line x1="293.21" y1="0" x2="293.21" y2="907"/>
<line x1="268.78" y1="0" x2="268.78" y2="907"/>
<line x1="244.35" y1="0" x2="244.35" y2="907"/>
<line x1="219.92" y1="0" x2="219.92" y2="907"/>
<line x1="195.49" y1="0" x2="195.49" y2="907"/>
<line x1="171.06" y1="0" x2="171.06" y2="907"/>
<line x1="146.63" y1="0" x2="146.63" y2="907"/>
<line x1="122.20" y1="0" x2="122.20" y2="907"/>
<line x1="97.77" y1="0" x2="97.77" y2="907"/>
<line x1="73.34" y1="0" x2="73.34" y2="907"/>
<line x1="48.91" y1="0" x2="48.91" y2="907"/>
<line x1="24.48" y1="0" x2="24.48" y2="907"/>
<line x1="0.05" y1="0" x2="0.05" y2="907"/>
<line x1="390.93" y1="0" x2="390.93" y2="907"/>
<line x1="415.36" y1="0" x2="415.36" y2="907"/>
<line x1="439.79" y1="0" x2="439.79" y2="907"/>
<line x1="464.22" y1="0" x2="464.22" y2="907"/>
<line x1="488.65" y1="0" x2="488.65" y2="907"/>
<line x1="513.08" y1="0" x2="513.08" y2="907"/>
<line x1="537.51" y1="0" x2="537.51" y2="907"/>
<line x1="561.94" y1="0" x2="561.94" y2="907"/>
<line x1="586.37" y1="0" x2="586.37" y2="907"/>
<line x1="610.80" y1="0" x2="610.80" y2="907"/>
<line x1="635.23" y1="0" x2="635.23" y2="907"/>
<line x1="659.66" y1="0" x2="659.66" y2="907"/>
<line x1="684.09" y1="0" x2="684.09" y2="907"/>
<line x1="708.52" y1="0" x2="708.52" y2="907"/>
<line x1="732.95" y1="0" x2="732.95" y2="907"/>
<line x1="0" y1="673.07" x2="733" y2="673.07"/>
<line x1="0" y1="648.64" x2="733" y2="648.64"/>
<line x1="0" y1="624.21" x2="733" y2="624.21"/>
<line x1="0" y1="599.78" x2="733" y2="599.78"/>
<line x1="0" y1="575.35" x2="733" y2="575.35"/>
<line x1="0" y1="550.92" x2="733" y2="550.92"/>
<line x1="0" y1="526.49" x2="733" y2="526.49"/>
<line x1="0" y1="502.06" x2="733" y2="502.06"/>
<line x1="0" y1="477.63" x2="733" y2="477.63"/>
<line x1="0" y1="453.20" x2="733" y2="453.20"/>
<line x1="0" y1="428.77" x2="733" y2="428.77"/>
<line x1="0" y1="404.34" x2="733" y2="404.34"/>
<line x1="0" y1="379.91" x2="733" y2="379.91"/>
<line x1="0" y1="355.48" x2="733" y2="355.48"/>
<line x1="0" y1="331.05" x2="733" y2="331.05"/>
<line x1="0" y1="306.62" x2="733" y2="306.62"/>
<line x1="0" y1="282.19" x2="733" y2="282.19"/>
<line x1="0" y1="257.76" x2="733" y2="257.76"/>
<line x1="0" y1="233.33" x2="733" y2="233.33"/>
<line x1="0" y1="208.90" x2="733" y2="208.90"/>
<line x1="0" y1="184.47" x2="733" y2="184.47"/>
<line x1="0" y1="160.04" x2="733" y2="160.04"/>
<line x1="0" y1="135.61" x2="733" y2="135.61"/>
<line x1="0" y1="111.18" x2="733" y2="111.18"/>
<line x1="0" y1="86.75" x2="733" y2="86.75"/>
<line x1="0" y1="62.32" x2="733" y2="62.32"/>
<line x1="0" y1="37.89" x2="733" y2="37.89"/>
<line x1="0" y1="13.46" x2="733" y2="13.46"/>
<line x1="0" y1="721.93" x2="733" y2="721.93"/>
<line x1="0" y1="746.36" x2="733" y2="746.36"/>
<line x1="0" y1="770.79" x2="733" y2="770.79"/>
<line x1="0" y1="795.22" x2="733" y2="795.22"/>
<line x1="0" y1="819.65" x2="733" y2="819.65"/>
<line x1="0" y1="844.08" x2="733" y2="844.08"/>
<line x1="0" y1="868.51" x2="733" y2="868.51"/>
<line x1="0" y1="892.94" x2="733" y2="892.94"/></svg>
<div class="abs" style="left:1117px;top:97px;width:1px;height:907px;background:#8a8a8a"></div>
<div class="abs" style="left:751px;top:794px;width:733px;height:1px;background:#9a9a9a"></div>
<div class="abs" style="left:761px;top:109px;width:154px;height:32px;background:rgba(40,40,40,0.74);border-radius:8px"></div>
<svg style="left:765px;top:115px" width="24" height="20" viewBox="0 0 24 20"><path d="M2 17.3 L14.6 3.9 Q16.6 2.4 17.2 4.4 L3.8 17.3 Z" fill="#8a8a8a"/><path d="M15.3 4.5 Q17 1.8 19 3.8 Q20.6 6 19.2 8.8 Q18.4 11.5 21.2 13.8" fill="none" stroke="#b88a30" stroke-width="1.1"/></svg>
<svg style="left:795px;top:114px" width="24" height="22" viewBox="0 0 24 22"><path d="M10 2.8 Q11.8 5.2 13.6 2.8 L16.6 2.8 Q18.3 4 21.1 9.2 L18.7 11.8 L17 10.3 L17 19.1 L7.1 19.1 L7.1 10.3 L5.2 11.8 L2.6 9.2 Q5.3 4 7 2.8 Z" fill="#808080"/></svg>
<svg style="left:827px;top:115px" width="20" height="20" viewBox="0 0 20 20"><circle cx="10" cy="10" r="8.6" fill="#e4e4e4"/><circle cx="10.8" cy="5.2" r="1.2" fill="#f06020"/><path d="M8.2 8 L11.5 8 L10.3 13.8 Q10.2 14.8 11.5 14.2 L11.3 15.2 Q9 16.5 8.3 15.5 Q7.8 14.8 8.2 13.5 L9.2 9.2 L8 9.2 Z" fill="#f06020"/></svg>
<svg style="left:857px;top:114px" width="20" height="22" viewBox="0 0 20 22"><path d="M2.2 8.1 L7 7.6 L5.5 15.5 L14.5 15.8 L14.2 17 Q10 19 4.5 18 Q3.6 17.5 3.5 16.5 Z" fill="#6c6c6c"/><path d="M8.2 4.3 Q12.5 3.6 16.6 4 Q17.8 4.6 17.4 6.2 L14.5 16.2 Q9.5 14.8 5.1 15 Z" fill="url(#gFabOr)"/><path d="M16.6 4 Q17.8 4.6 17.4 6.2 L14.5 16.2 L13.8 15.9 L16.3 5 Z" fill="#b07028"/></svg>
<svg style="left:886px;top:114px" width="22" height="22" viewBox="0 0 22 22"><path d="M9.2 2.8 Q11 5.2 12.8 2.8 L15.8 2.8 Q17.5 4 20.3 9.2 L17.9 11.8 L16.2 10.3 L16.2 18.8 L6.3 18.8 L6.3 10.3 L4.4 11.8 L1.8 9.2 Q4.5 4 6.2 2.8 Z" fill="url(#gWhiteSh)"/><defs><linearGradient id="gLk" x1="0" y1="0" x2="0" y2="1"><stop offset="0" stop-color="#f59000"/><stop offset="1" stop-color="#ffc800"/></linearGradient></defs><path d="M4 13.9 Q4 10.9 5.8 10.9 Q7.6 10.9 7.6 13.9" fill="none" stroke="#f09000" stroke-width="1.2"/><rect x="2.8" y="13.7" width="6" height="5.2" rx="0.5" fill="url(#gLk)"/><path d="M5.2 15 L6.9 16.3 L5.2 17.6 Z" fill="#2a2a2a"/></svg>
<div class="title" style="left:1491px;top:43px;width:417px;background:#262626"></div>
<div class="ttl" style="left:1510px;top:43px;width:383px">物体窗口</div>
<svg style="left:1495px;top:47px" width="12" height="12" viewBox="0 0 12 12">
<path d="M0.6 5 L5 5 L5 2.2 L8.6 6 L5 9.8 L5 7 L0.6 7 Z" fill="#ececec"/>
<rect x="10.3" y="0" width="0.8" height="11" fill="#444"/></svg>
<svg style="left:1902px;top:48px" width="12" height="11" viewBox="0 0 12 11">
<rect x="3.5" y="0.8" width="7.2" height="5.6" rx="1.3" fill="none" stroke="#d0d0d0" stroke-width="1"/>
<path d="M2.8 3.3 L1.8 3.3 Q0.8 3.3 0.8 4.5 L0.8 8.6 Q0.8 9.8 2 9.8 L6.5 9.8 Q7.7 9.8 7.7 8.6 L7.7 7.2" fill="none" stroke="#d0d0d0" stroke-width="1"/>
</svg>
<div class="abs" style="left:1491px;top:63px;width:417px;height:400px;background:#2f2f2f"></div>
<div class="abs" style="left:1491px;top:91px;width:417px;height:2px;background:#3c3c3c"></div>
<div class="abs" style="left:1538px;top:91px;width:47px;height:2px;background:#ffac00"></div>
<svg style="left:1501.5px;top:66px" width="24" height="24" viewBox="-12 -12 24 24"><g fill="#f4f4f4"><rect x="-6.8" y="-7.4" width="2" height="1.8"/><rect x="-4" y="-7.4" width="10.8" height="1.8" rx="0.5"/><rect x="-6.8" y="-3.4" width="2" height="1.8"/><rect x="-4" y="-3.4" width="10.8" height="1.8" rx="0.5"/><rect x="-6.8" y="0.6" width="2" height="1.8"/><rect x="-4" y="0.6" width="10.8" height="1.8" rx="0.5"/><rect x="-6.8" y="4.6" width="2" height="1.8"/><rect x="-4" y="4.6" width="10.8" height="1.8" rx="0.5"/></g></svg>
<svg style="left:1549.0px;top:66px" width="24" height="24" viewBox="-12 -12 24 24"><path d="M-7.8 -3.5 L-2.6 -3.8 L-4.8 4 L5.7 4.7 L5.2 6.8 Q4 7.6 -1 7.2 L-7 6.6 Z" fill="#a87410"/><path d="M-2.4 -6.2 Q2 -7.2 6.5 -7.2 Q8.3 -7 8 -5.3 L5.9 4.7 Q0 3.8 -5.1 4 Z" fill="#ffaa00"/><path d="M-5.1 4 Q0 3.8 5.9 4.7 L5.3 6.6 Q0 5.8 -5 6.4 Z" fill="#c88a08"/></svg>
<svg style="left:1596.0px;top:66px" width="24" height="24" viewBox="-12 -12 24 24"><rect x="-8.1" y="-8" width="16.3" height="16.2" rx="1.5" fill="#f4f4f4"/><rect x="-3.25" y="-6.50" width="3.25" height="3.25" fill="#1a1a1a"/><rect x="3.25" y="-6.50" width="3.25" height="3.25" fill="#1a1a1a"/><rect x="-6.50" y="-3.25" width="3.25" height="3.25" fill="#1a1a1a"/><rect x="0.00" y="-3.25" width="3.25" height="3.25" fill="#1a1a1a"/><rect x="-3.25" y="0.00" width="3.25" height="3.25" fill="#1a1a1a"/><rect x="3.25" y="0.00" width="3.25" height="3.25" fill="#1a1a1a"/><rect x="-6.50" y="3.25" width="3.25" height="3.25" fill="#1a1a1a"/><rect x="0.00" y="3.25" width="3.25" height="3.25" fill="#1a1a1a"/></svg>
<svg style="left:1643.0px;top:66px" width="24" height="24" viewBox="-12 -12 24 24"><circle cx="0" cy="0" r="8.2" fill="#f4f4f4"/><g fill="#2e2e2e"><circle cx="-2.6" cy="-2.6" r="1.3"/><circle cx="2.6" cy="-2.6" r="1.3"/><circle cx="-2.6" cy="2.6" r="1.3"/><circle cx="2.6" cy="2.6" r="1.3"/></g></svg>
<svg style="left:1690.0px;top:66px" width="24" height="24" viewBox="-12 -12 24 24"><circle cx="-5.8" cy="0" r="2.6" fill="#f4f4f4"/><rect x="-5" y="-0.9" width="12.8" height="1.9" fill="#f4f4f4"/></svg>
<svg style="left:1737.0px;top:66px" width="24" height="24" viewBox="-12 -12 24 24"><path d="M-7.2 7.2 L7.6 -7.6" stroke="#f4f4f4" stroke-width="2.6" stroke-linecap="round" stroke-dasharray="2.4 3.3"/></svg>
<svg style="left:1783.8px;top:66px" width="24" height="24" viewBox="-12 -12 24 24"><path d="M-4.4 7.6 C-4.72 6.75 -6.13 3.87 -6.3 2.5 C-6.47 1.13 -5.92 -0.22 -5.4 -0.6 C-4.88 -0.98 -3.93 -0.47 -3.2 0.2 C-2.47 0.87 -1.57 3.77 -1.0 3.4 C-0.43 3.03 -0.18 -0.30 0.2 -2 C0.58 -3.70 0.78 -6.17 1.3 -6.8 C1.82 -7.43 2.78 -6.63 3.3 -5.8 C3.82 -4.97 4.12 -2.02 4.4 -1.8 C4.68 -1.58 4.70 -3.80 5.0 -4.5 C5.30 -5.20 5.72 -6.08 6.2 -6 C6.68 -5.92 7.62 -4.33 7.9 -4.0" fill="none" stroke="#f4f4f4" stroke-width="2.8" stroke-linecap="round" stroke-linejoin="round"/><path d="M-4.4 7.6 C-4.72 6.75 -6.13 3.87 -6.3 2.5 C-6.47 1.13 -5.92 -0.22 -5.4 -0.6 C-4.88 -0.98 -3.93 -0.47 -3.2 0.2 C-2.47 0.87 -1.57 3.77 -1.0 3.4 C-0.43 3.03 -0.18 -0.30 0.2 -2 C0.58 -3.70 0.78 -6.17 1.3 -6.8 C1.82 -7.43 2.78 -6.63 3.3 -5.8 C3.82 -4.97 4.12 -2.02 4.4 -1.8 C4.68 -1.58 4.70 -3.80 5.0 -4.5 C5.30 -5.20 5.72 -6.08 6.2 -6 C6.68 -5.92 7.62 -4.33 7.9 -4.0" fill="none" stroke="#3a3a3a" stroke-width="0.6" stroke-linecap="round"/></svg>
<svg style="left:1831.0px;top:66px" width="24" height="24" viewBox="-12 -12 24 24"><path d="M-7.8 -8 Q-4 -7 -1.2 -5.5 L1.2 -5.5 Q4 -7 7.8 -8 Q7 -4 7.8 0.5 Q4 0 1.2 -1.5 L-1.2 -1.5 Q-4 0 -7.8 0.5 Q-7 -4 -7.8 -8 Z" fill="#f4f4f4"/><path d="M-5.2 -5 L-2.2 -3.5 L-5.2 -2 Z M5.2 -5 L2.2 -3.5 L5.2 -2 Z" fill="#2e2e2e"/><rect x="-0.9" y="-6" width="1.8" height="5" fill="#b8b8b8"/><path d="M-2.5 0 Q-5 3 -6 8 L-4 6.8 L-2.6 8.2 Q-2 4 -0.8 0.5 Z M2.5 0 Q5 3 6 8 L4 6.8 L2.6 8.2 Q2 4 0.8 0.5 Z" fill="#b0b0b0"/></svg>
<svg style="left:1878.0px;top:66px" width="24" height="24" viewBox="-12 -12 24 24"><path d="M-5.4 -2.5 L-5.4 -6 Q-5.4 -8 -3.4 -8 L3.4 -8 Q5.4 -8 5.4 -6 L5.4 -2.5 L3.8 0.5 L-3.8 0.5 Z" fill="#f4f4f4"/><rect x="-1.5" y="-7" width="3" height="9.5" rx="1.5" fill="#2e2e2e"/><rect x="-0.6" y="-6.2" width="1.2" height="7.5" rx="0.6" fill="#f4f4f4"/><path d="M-1.5 1.5 L-3.9 2.6 L-3.9 7 Q-3.9 8.2 -2.7 8.2 L2.7 8.2 Q3.9 8.2 3.9 7 L3.9 2.6 L1.5 1.5 Z" fill="#f4f4f4"/><rect x="-1.9" y="4.2" width="3.8" height="1.9" rx="0.8" fill="#2e2e2e"/></svg>
<svg style="left:1502px;top:116px" width="16" height="14" viewBox="0 0 16 14"><g transform="translate(-2.2,-2.6) scale(0.62)" fill="none" stroke="#f0a000" stroke-width="2.4"><path d="M11.72 16.9 L11.72 7.6 A3.18 3.18 0 0 1 18.08 7.6 L18.08 10.4"/><g transform="rotate(120 14.9 15)"><path d="M11.72 16.9 L11.72 7.6 A3.18 3.18 0 0 1 18.08 7.6 L18.08 10.4"/></g><g transform="rotate(240 14.9 15)"><path d="M11.72 16.9 L11.72 7.6 A3.18 3.18 0 0 1 18.08 7.6 L18.08 10.4"/></g></g></svg>
<svg style="left:1726px;top:115px" width="15" height="14" viewBox="0 0 15 14"><path d="M1 3.5 L5 3.5 L6 4.8 L13 4.8 L13 12.8 L1 12.8 Z" fill="#e6e6e6"/><path d="M0.8 6.5 L13.2 6.5 L13 12.8 L1 12.8 Z" fill="#f4f4f4"/><path d="M8.5 1 L8.5 7.5 M5.3 4.2 L11.7 4.2" stroke="#2f2f2f" stroke-width="2.6"/><path d="M8.5 1.2 L8.5 7.3 M5.5 4.2 L11.5 4.2" stroke="#f0f0f0" stroke-width="1.4"/></svg>
<div class="abs" style="left:1744px;top:109px;width:1px;height:26px;background:#3a3a3a"></div>
<svg style="left:1752px;top:116px" width="12" height="12" viewBox="0 0 12 12"><path d="M5.7 1.2 L5.7 10.8 M0.8 6 L10.6 6" stroke="#f0f0f0" stroke-width="1.5"/></svg>
<div class="abs" style="left:1768px;top:115px;font-size:12px;line-height:17px;color:#e8e8e8;white-space:nowrap">增加</div>
<svg style="left:1807px;top:115px" width="13" height="13" viewBox="0 0 13 13"><rect x="1.2" y="3.8" width="7.5" height="7.5" rx="0.8" fill="none" stroke="#6a6a6a" stroke-width="1.1"/><path d="M3.5 3.5 L3.5 1.8 L11 1.8 L11 9.2 L9 9.2" fill="none" stroke="#6a6a6a" stroke-width="1.1"/></svg>
<div class="abs" style="left:1824px;top:115px;font-size:12px;line-height:17px;color:#5c5c5c;white-space:nowrap">复制</div>
<svg style="left:1862px;top:114px" width="14" height="14" viewBox="0 0 14 14"><path d="M1.5 5.5 L4.5 5.5 L4.5 8 L9.5 8 L9.5 5.5 L11.5 5.5 L11.5 12.8 L1.5 12.8 Z" fill="#6a6a6a"/><path d="M7 8 L7 3.5 L9.5 3.5 M10 1 L10 6 M7.5 3.5 L12.5 3.5" stroke="#6a6a6a" stroke-width="1.2" fill="none"/></svg>
<div class="abs" style="left:1880px;top:115px;font-size:12px;line-height:17px;color:#5c5c5c;white-space:nowrap">应用</div>
<div class="abs" style="left:1501px;top:141px;width:405px;height:1px;background:#3a3a3a"></div>
<div class="abs" style="left:1501px;top:142px;width:407px;height:20px;background:#262626"></div>
<svg style="left:1512px;top:148px" width="8" height="8" viewBox="0 0 8 8"><path d="M1.2 1.5 L6.8 1.5 L4 6.5 Z" fill="#f0f0f0"/></svg>
<div class="abs" style="left:1662px;top:146px;font-size:12px;line-height:17px;color:#e0e0e0;white-space:nowrap">默认组</div>
<svg style="left:1720px;top:145px" width="14" height="14" viewBox="0 0 14 14"><path d="M2 12.5 L3.2 9 L10.5 1.8 L12.5 3.8 L5.2 11 Z" fill="#f0f0f0"/><path d="M2 12.5 L3.2 9 L5.2 11 Z" fill="#c8c8c8"/></svg>
<svg style="left:1857px;top:146px" width="12" height="12" viewBox="0 0 12 12"><path d="M5.8 1 L5.8 11 M0.8 6 L10.8 6" stroke="#f4f4f4" stroke-width="1.8"/></svg>
<svg style="left:1876px;top:145px" width="14" height="13" viewBox="0 0 14 13"><path d="M0.8 2 L5 2 L6 3.2 L12.2 3.2 L12.2 5.5 L0.8 5.5 Z" fill="#f0f0f0"/><path d="M0.5 5 L13 5 L12.2 12.6 L1.2 12.6 Z" fill="#f8f8f8"/></svg>
<svg style="left:1505px;top:178px" width="13" height="11" viewBox="0 0 13 11"><path d="M1.5 5.5 L4.8 9 L11.5 1.5" fill="none" stroke="#f5a000" stroke-width="2"/></svg>
<div class="abs" style="left:1524px;top:166px;width:37px;height:37px;background:#ffffff"></div>
<div class="abs" style="left:1569px;top:177px;font-size:12px;line-height:17px;color:#e0e0e0;white-space:nowrap">织物 1</div>
<svg style="left:1883px;top:181px" width="12" height="6" viewBox="0 0 12 6"><g fill="#f0f0f0"><rect x="1.2" y="1.6" width="2.4" height="2.6"/><rect x="4.8" y="1.6" width="2.4" height="2.6"/><rect x="8.4" y="1.6" width="2.4" height="2.6"/></g></svg>
<div class="abs" style="left:1506px;top:205px;width:392px;height:1px;background:#3a3a3a"></div>
<div class="title" style="left:1491px;top:468px;width:417px;background:#262626"></div>
<div class="ttl" style="left:1510px;top:468px;width:383px">属性编辑器</div>
<svg style="left:1495px;top:471px" width="12" height="12" viewBox="0 0 12 12">
<path d="M0.6 5 L5 5 L5 2.2 L8.6 6 L5 9.8 L5 7 L0.6 7 Z" fill="#ececec"/>
<rect x="10.3" y="0" width="0.8" height="11" fill="#444"/></svg>
<svg style="left:1902px;top:473px" width="12" height="11" viewBox="0 0 12 11">
<rect x="3.5" y="0.8" width="7.2" height="5.6" rx="1.3" fill="none" stroke="#d0d0d0" stroke-width="1"/>
<path d="M2.8 3.3 L1.8 3.3 Q0.8 3.3 0.8 4.5 L0.8 8.6 Q0.8 9.8 2 9.8 L6.5 9.8 Q7.7 9.8 7.7 8.6 L7.7 7.2" fill="none" stroke="#d0d0d0" stroke-width="1"/>
</svg>
<div class="abs" style="left:1491px;top:488px;width:417px;height:518px;background:#2f2f2f"></div>
<div class="abs" style="left:16px;top:1014px;font-size:11px;line-height:14px;color:#d0d0d0;white-space:nowrap">Version: 2025.2.143 (r57286)</div>
<svg style="left:975px;top:1016px" width="14" height="10" viewBox="0 0 14 10"><path d="M2 8 L7 2 L12 8 Z" fill="#e6e6e6"/></svg>
<svg style="left:1810px;top:1015px" width="16" height="14" viewBox="0 0 16 14"><rect x="1.5" y="2" width="13" height="10" rx="1" fill="#5a5a5a" stroke="#9a9a9a" stroke-width="0.8"/><rect x="7.6" y="2" width="0.8" height="10" fill="#222"/><rect x="2.5" y="3" width="4.6" height="8" fill="#6a6a6a"/><rect x="8.9" y="3" width="4.6" height="8" fill="#6a6a6a"/></svg>
<svg style="left:1834px;top:1015px" width="16" height="14" viewBox="0 0 16 14"><rect x="1.5" y="2.2" width="13.5" height="9.6" rx="1" fill="#f0f0f0"/><text x="8.2" y="10.3" font-family="Liberation Sans" font-weight="bold" font-size="8.5" text-anchor="middle" fill="#1c1c1c">3D</text></svg>
<svg style="left:1858px;top:1015px" width="16" height="14" viewBox="0 0 16 14"><rect x="1.5" y="2.2" width="13.5" height="9.6" rx="1" fill="#f0f0f0"/><text x="8.2" y="10.3" font-family="Liberation Sans" font-weight="bold" font-size="8.5" text-anchor="middle" fill="#1c1c1c">2D</text></svg>
<div class="abs" style="left:1878px;top:1012px;width:1px;height:20px;background:#2a2a2a"></div>
<svg style="left:1884px;top:1014px" width="16" height="16" viewBox="0 0 16 16"><path d="M12 5 A5 5 0 1 0 12.5 9.5" fill="none" stroke="#e6e6e6" stroke-width="1.5"/><path d="M9.5 2.2 L13.5 5.2 L9.8 7.8 Z" fill="#e6e6e6"/></svg>
</body></html>
